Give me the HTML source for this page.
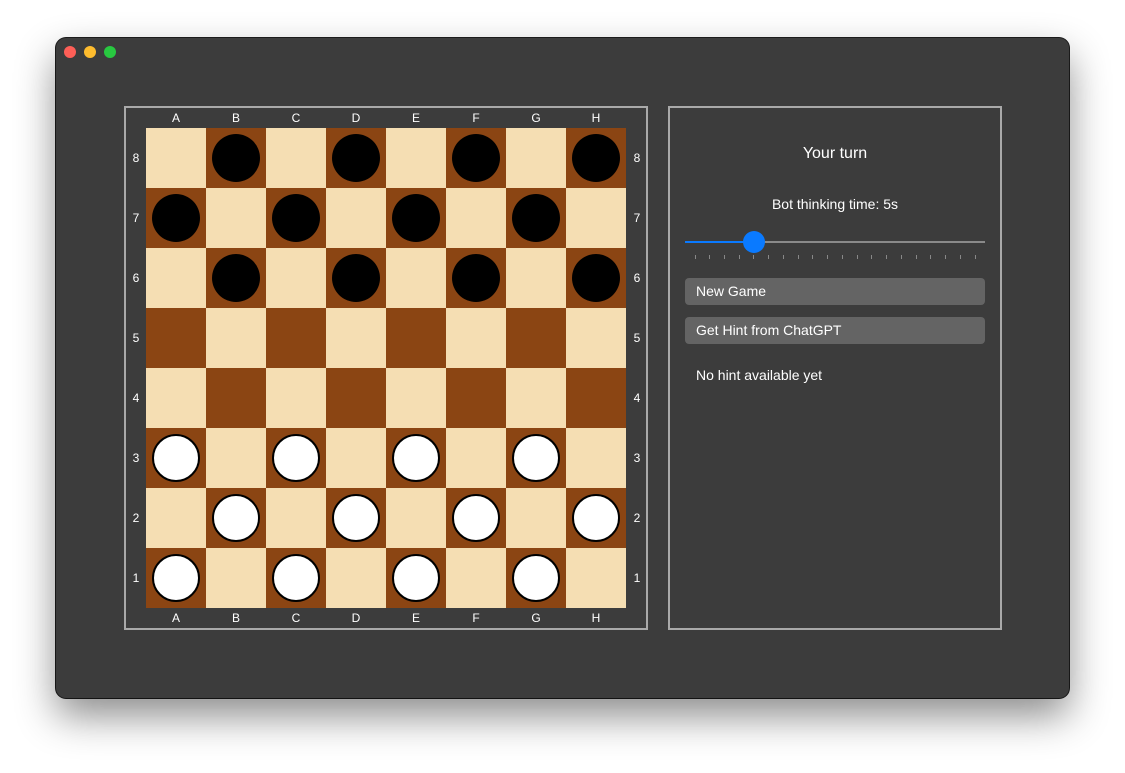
<!DOCTYPE html>
<html><head><style>
body{margin:0;width:1125px;height:773px;background:#fff;position:relative;overflow:hidden;font-family:"Liberation Sans",sans-serif}
.win{position:absolute;left:56px;top:38px;width:1013px;height:660px;background:#3c3c3c;border-radius:10px;box-shadow:0 18px 40px rgba(0,0,0,.45),0 0 0 1px #1e1e1e}
.dot{position:absolute;top:8px;width:12px;height:12px;border-radius:50%}
.frame{position:absolute;border:2px solid #a9a9a9;box-sizing:border-box}
.sq{position:absolute;width:60px;height:60px}
.lab{position:absolute;color:#fff;font-size:12px;text-align:center;width:20px;line-height:14px}
.p{position:absolute;width:48px;height:48px;border-radius:50%;box-sizing:border-box}
.t{position:absolute;color:#fff}
.btn{position:absolute;left:685px;width:300px;height:27px;background:#646464;border-radius:4px;color:#fff;font-size:14px;line-height:27px;box-sizing:border-box;padding-left:11px}
.tick{position:absolute;top:255px;width:1px;height:4px;background:#888}
</style></head><body>
<div class="win">
<div class="dot" style="left:8px;background:#fe5f57"></div>
<div class="dot" style="left:28px;background:#febc2e"></div>
<div class="dot" style="left:48px;background:#28c840"></div>
</div>
<div class="frame" style="left:124px;top:106px;width:524px;height:524px"></div>
<div class="frame" style="left:668px;top:106px;width:334px;height:524px"></div>
<div id="b"></div>
<div class="t" style="left:668px;width:334px;text-align:center;top:145px;font-size:16px">Your turn</div>
<div class="t" style="left:668px;width:334px;text-align:center;top:196px;font-size:14px">Bot thinking time: 5s</div>
<div style="position:absolute;left:685px;top:241px;width:300px;height:2px;background:#8a8a8a"></div>
<div style="position:absolute;left:685px;top:241px;width:69px;height:2px;background:#0a7aff"></div>
<div style="position:absolute;left:743px;top:231px;width:22px;height:22px;border-radius:50%;background:#0a7aff"></div>
<div id="ticks"></div>
<div class="btn" style="top:278px">New Game</div>
<div class="btn" style="top:317px">Get Hint from ChatGPT</div>
<div class="t" style="left:696px;top:367px;font-size:14px">No hint available yet</div>
<script>
var h='',L='ABCDEFGH';
for(var r=0;r<8;r++)for(var c=0;c<8;c++){
var x=146+c*60,y=128+r*60,dark=(r+c)%2==1;
h+='<div class="sq" style="left:'+x+'px;top:'+y+'px;background:'+(dark?'#8b4513':'#f5deb3')+'"></div>';
if(dark&&r<3)h+='<div class="p" style="left:'+(x+6)+'px;top:'+(y+6)+'px;background:#000"></div>';
if(dark&&r>4)h+='<div class="p" style="left:'+(x+6)+'px;top:'+(y+6)+'px;background:#fff;border:2px solid #000"></div>';
}
for(var i=0;i<8;i++){
var x=146+i*60+20;
h+='<div class="lab" style="left:'+(x)+'px;top:111px">'+L[i]+'</div>';
h+='<div class="lab" style="left:'+(x)+'px;top:611px">'+L[i]+'</div>';
var y=128+i*60+23;
h+='<div class="lab" style="left:126px;top:'+y+'px">'+(8-i)+'</div>';
h+='<div class="lab" style="left:627px;top:'+y+'px">'+(8-i)+'</div>';
}
document.getElementById('b').innerHTML=h;
var t='';for(var i=0;i<20;i++)t+='<div class="tick" style="left:'+Math.round(694.5+i*14.74)+'px"></div>';
document.getElementById('ticks').innerHTML=t;
</script>
</body></html>
